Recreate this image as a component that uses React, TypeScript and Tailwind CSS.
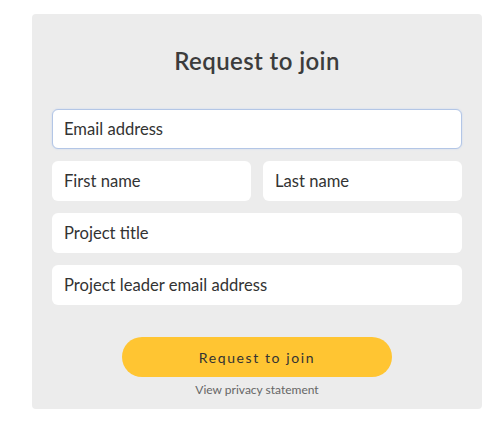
export default function App() {
  const fields = ["Project title", "Project leader email address"];

  return (
    <div className="min-h-screen bg-white pt-[14px] pl-8" style={{ fontFamily: "Lato, 'Open Sans', sans-serif" }}>
      <div className="w-[450px] rounded-[4px] bg-[#ececec] px-5 pt-[31px] pb-[11px]">
        <h1 className="text-center text-[24px] leading-8 font-semibold text-[#3c3c3c] tracking-[0.4px]">
          Request to join
        </h1>

        <div className="mt-[32px] flex flex-col gap-3">
          <input
            placeholder="Email address"
            className="h-10 w-full rounded-[6px] border border-[#b3c6e6] bg-white px-[11px] text-[16.6px] text-[#333] placeholder:text-[#333] shadow-[0_0_2px_#c5d4ee] outline-none"
          />
          <div className="flex gap-3">
            <input
              placeholder="First name"
              className="h-10 min-w-0 flex-1 rounded-[6px] bg-white px-3 text-[16.6px] placeholder:text-[#333] outline-none"
            />
            <input
              placeholder="Last name"
              className="h-10 min-w-0 flex-1 rounded-[6px] bg-white px-3 text-[16.6px] placeholder:text-[#333] outline-none"
            />
          </div>
          {fields.map((f) => (
            <input
              key={f}
              placeholder={f}
              className="h-10 w-full rounded-[6px] bg-white px-3 text-[16.6px] placeholder:text-[#333] outline-none"
            />
          ))}
        </div>

        <div className="mt-8 flex flex-col items-center">
          <button className="h-10 w-[270px] rounded-full bg-[#ffc532] text-[14px] tracking-[1.6px] text-[#333]">
            Request to join
          </button>
          <a className="mt-[5px] text-[12px] leading-4 text-[#666]">View privacy statement</a>
        </div>
      </div>
    </div>
  );
}
